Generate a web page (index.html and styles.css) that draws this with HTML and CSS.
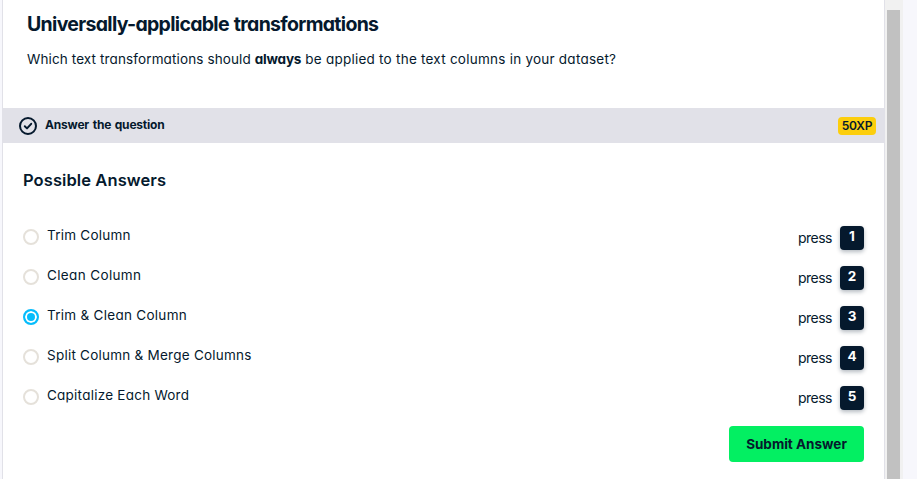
FILE: index.html
```html
<!DOCTYPE html>
<html lang="en">
<head>
<meta charset="utf-8">
<title>Universally-applicable transformations</title>
<link rel="stylesheet" href="styles.css">
</head>
<body>
<div class="layout">
  <main class="panel">
    <section class="intro">
      <h1 class="title">Universally-applicable transformations</h1>
      <p class="prompt"><span class="lead">Which text transformations should </span><strong>always</strong> be applied to the text columns in your dataset?</p>
    </section>
    <header class="bar">
      <svg class="check" viewBox="0 0 18 18" width="18" height="18" fill="none" stroke="#05192d" stroke-width="2" stroke-linecap="round" stroke-linejoin="round"><circle cx="9" cy="9" r="8"/><path d="M5.8 9.3 8 11.4 12.2 6.8"/></svg>
      <span class="bar-title">Answer the question</span>
      <span class="xp"><span>50XP</span></span>
    </header>
    <section class="answers">
      <h2 class="heading">Possible Answers</h2>
      <ul class="options">
        <li class="option"><i class="radio"></i><span class="label">Trim Column</span><span class="press">press</span><kbd class="key">1</kbd></li>
        <li class="option"><i class="radio"></i><span class="label label-clean">Clean Column</span><span class="press">press</span><kbd class="key">2</kbd></li>
        <li class="option"><i class="radio selected"></i><span class="label label-both">Trim &amp; Clean Column</span><span class="press">press</span><kbd class="key">3</kbd></li>
        <li class="option"><i class="radio"></i><span class="label">Split Column &amp; Merge Columns</span><span class="press">press</span><kbd class="key">4</kbd></li>
        <li class="option"><i class="radio"></i><span class="label">Capitalize Each Word</span><span class="press">press</span><kbd class="key">5</kbd></li>
      </ul>
      <button class="submit"><span>Submit Answer</span></button>
    </section>
  </main>
  <div class="track"><div class="thumb"></div></div>
</div>
</body>
</html>
```
FILE: styles.css
```css
* { box-sizing: border-box; }
body {
  margin: 0;
  height: 479px;
  overflow: hidden;
  background: #f7f7fc;
  color: #05192d;
  font-family: Inter, "Open Sans", sans-serif;
  font-feature-settings: "cv11" 1;
  font-size: 14px;
  line-height: 20px;
}
.layout { display: flex; height: 479px; padding-left: 2px; }
.panel {
  width: 883px;
  background: #fff;
  border-left: 1px solid #e1e1e8;
  border-right: 1px solid #e1e1e8;
}
.track { width: 18px; padding: 10px 3px 0 2px; background: #f1f1f1; }
.thumb { height: 469px; background: #c1c1c1; }
.intro { height: 108px; padding: 10px 24px 0; white-space: nowrap; }
.title { margin: 0; font-size: 19.5px; line-height: 28px; font-weight: 650; letter-spacing: -0.69px; word-spacing: 1px; }
.prompt { margin: 11px 0 0; font-size: 13.5px; letter-spacing: 0.24px; }
.lead { letter-spacing: 0.12px; }
.prompt strong { letter-spacing: -0.2px; }
.bar {
  display: flex;
  align-items: center;
  height: 35px;
  padding: 0 8px 0 16px;
  background: #e1e1e8;
}
.bar-title { margin: -2px auto 0 8px; font-size: 12px; font-weight: 650; letter-spacing: -0.2px; word-spacing: 1px; }
.xp {
  width: 38px;
  height: 18px;
  border-radius: 4px;
  background: #fcce0d;
  font-size: 12px;
  line-height: 18px;
  font-weight: 600;
  letter-spacing: -0.2px;
  text-align: center;
}
.answers { display: flex; flex-direction: column; padding: 25px 20px 0; }
.heading { margin: 0; font-size: 16.5px; line-height: 24px; font-weight: 600; letter-spacing: 0.09px; }
.options { margin: 26px 0 0; padding: 0; list-style: none; }
.option { display: flex; align-items: center; height: 40px; }
.radio {
  width: 16px;
  height: 16px;
  margin: -2px 8px 0 0;
  border: 2px solid #e5e1da;
  border-radius: 50%;
}
.selected { border-color: #06bdfc; background: #06bdfc; box-shadow: inset 0 0 0 2px #fff; }
.label { margin: -6px auto 0 0; font-size: 13.5px; letter-spacing: 0.24px; }
.label-clean { letter-spacing: 0.36px; }
.label-both { letter-spacing: 0.28px; }
.press { margin-right: 8px; letter-spacing: -0.5px; }
.key {
  width: 24px;
  height: 24px;
  border-radius: 4px;
  background: #05192d;
  box-shadow: 0 2px 4px rgba(5, 25, 45, .3);
  color: #fff;
  font: 700 13.5px/21px Inter, sans-serif;
  text-align: center;
}
.submit {
  align-self: flex-end;
  width: 135px;
  height: 36px;
  margin-top: 8px;
  padding: 0;
  border: 0;
  border-radius: 4px;
  background: #03ef62;
  color: #05192d;
  font: 700 13.5px/36px Inter, sans-serif;
  font-feature-settings: "cv11" 1;
}
```
